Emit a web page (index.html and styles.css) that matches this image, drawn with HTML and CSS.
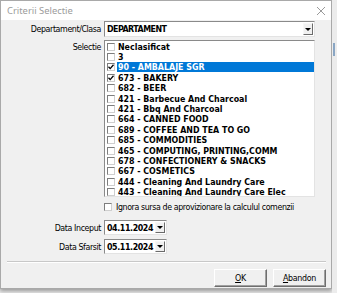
FILE: index.html
```html
<!DOCTYPE html>
<html>
<head>
<meta charset="utf-8">
<link rel="stylesheet" href="styles.css">
</head>
<body>
<div class="screen">
  <div class="dialog">
    <div class="titlebar">
      <span class="title">Criterii Selectie</span>
      <svg class="close" width="10" height="10" viewBox="0 0 10 10"><path d="M1 1L9 9M9 1L1 9" stroke="#9a9a9a" stroke-width="1" fill="none"/></svg>
    </div>
    <div class="body">
      <div class="row row-combo">
        <span class="lbl">Departament/Clasa</span>
        <div class="combo">
          <span class="combo-text">DEPARTAMENT</span>
          <span class="dd"><span class="tri"></span></span>
        </div>
      </div>
      <div class="row row-list">
        <span class="lbl lbl-top">Selectie</span>
        <div class="listbox">
          <div class="item"><span class="cb"></span><span class="txt">Neclasificat</span></div>
          <div class="item"><span class="cb"></span><span class="txt">3</span></div>
          <div class="item"><span class="cb"><svg class="tick" width="6" height="6" viewBox="0 0 6 6"><path d="M0.5 2.8L2.2 4.6L5.5 0.8" stroke="#000" stroke-width="1.3" fill="none"/></svg></span><span class="txt sel">90 - AMBALAJE SGR</span></div>
          <div class="item"><span class="cb"><svg class="tick" width="6" height="6" viewBox="0 0 6 6"><path d="M0.5 2.8L2.2 4.6L5.5 0.8" stroke="#000" stroke-width="1.3" fill="none"/></svg></span><span class="txt">673 - BAKERY</span></div>
          <div class="item"><span class="cb"></span><span class="txt">682 - BEER</span></div>
          <div class="item"><span class="cb"></span><span class="txt">421 - Barbecue And Charcoal</span></div>
          <div class="item"><span class="cb"></span><span class="txt">421 - Bbq And Charcoal</span></div>
          <div class="item"><span class="cb"></span><span class="txt">664 - CANNED FOOD</span></div>
          <div class="item"><span class="cb"></span><span class="txt">689 - COFFEE AND TEA TO GO</span></div>
          <div class="item"><span class="cb"></span><span class="txt">685 - COMMODITIES</span></div>
          <div class="item"><span class="cb"></span><span class="txt">465 - COMPUTING, PRINTING,COMM</span></div>
          <div class="item"><span class="cb"></span><span class="txt">678 - CONFECTIONERY &amp; SNACKS</span></div>
          <div class="item"><span class="cb"></span><span class="txt">667 - COSMETICS</span></div>
          <div class="item"><span class="cb"></span><span class="txt">444 - Cleaning And Laundry Care</span></div>
          <div class="item"><span class="cb"></span><span class="txt">443 - Cleaning And Laundry Care Elec</span></div>
        </div>
      </div>
      <div class="row row-check">
        <span class="lbl"></span>
        <div class="check-wrap"><span class="cb"></span><span class="check-text">Ignora sursa de aprovizionare la calculul comenzii</span></div>
      </div>
      <div class="row row-date">
        <span class="lbl">Data Inceput</span>
        <div class="datebox"><span class="date-text">04.11.2024</span><span class="dd"><span class="tri"></span></span></div>
      </div>
      <div class="row row-date">
        <span class="lbl">Data Sfarsit</span>
        <div class="datebox"><span class="date-text">05.11.2024</span><span class="dd"><span class="tri"></span></span></div>
      </div>
      <div class="sep"></div>
      <div class="buttons">
        <button class="btn"><u>O</u>K</button>
        <button class="btn"><u>A</u>bandon</button>
      </div>
    </div>
  </div>
  <div class="side"><div class="side-bar"></div></div>
</div>
</body>
</html>
```
FILE: styles.css
```css
* { box-sizing: border-box; }
html, body { margin: 0; padding: 0; }
body {
  width: 337px;
  height: 293px;
  overflow: hidden;
  background: #e6e6e6;
  font-family: "DejaVu Sans Condensed", "DejaVu Sans", sans-serif;
  font-stretch: condensed;
  font-size: 8.8px;
  color: #000;
}
.screen {
  display: flex;
  width: 337px;
  height: 293px;
  background: #e9e9e9;
}
.dialog {
  width: 332px;
  height: 289px;
  border: 1px solid #a9a9a9;
  background: #f0f0f0;
  display: flex;
  flex-direction: column;
  box-shadow: 0 2px 4px rgba(0,0,0,0.35);
  flex: none;
}
.side {
  flex: 1;
  background: #ececec;
  padding-top: 43px;
  padding-left: 1px;
}
.side-bar {
  width: 2px;
  height: 13px;
  background: #8aa6c4;
}
.titlebar {
  height: 19px;
  background: #fff;
  display: flex;
  align-items: center;
  justify-content: space-between;
  padding: 0 5px 0 6px;
  flex: none;
}
.title {
  font-family: "Noto Sans", "Open Sans", sans-serif;
  font-stretch: normal;
  font-size: 9.4px;
  color: #9b9b9b;
}
.close { display: block; }
.body {
  flex: 1;
  display: flex;
  flex-direction: column;
  padding-top: 1px;
}
.row {
  display: flex;
  align-items: center;
  column-gap: 3px;
}
.lbl {
  width: 100px;
  flex: none;
  text-align: right;
  white-space: nowrap;
  letter-spacing: -0.4px;
}
.combo, .datebox {
  display: flex;
  align-items: center;
  justify-content: space-between;
  background: #fff;
  border: 1px solid;
  border-color: #8a8a8a #e3e3e3 #e3e3e3 #8a8a8a;
  padding: 1px;
  font-weight: bold;
}
.combo { width: 211px; height: 16px; }
.combo-text { padding-left: 1px; letter-spacing: -0.5px; }
.date-text { padding-left: 1px; letter-spacing: -0.4px; }
.dd {
  width: 10px;
  height: 12px;
  background: #f0f0f0;
  border: 1px solid;
  border-color: #f7f7f7 #6b6b6b #6b6b6b #f7f7f7;
  display: flex;
  align-items: center;
  justify-content: center;
  flex: none;
}
.tri {
  width: 0;
  height: 0;
  border-left: 3px solid transparent;
  border-right: 3px solid transparent;
  border-top: 3px solid #000;
}
.row-list { align-items: flex-start; margin-top: 3px; }
.lbl-top { padding-top: 2px; }
.listbox {
  width: 211px;
  height: 157px;
  background: #fff;
  border: 1px solid;
  border-color: #8a8a8a #e3e3e3 #e3e3e3 #8a8a8a;
  padding: 0.5px 0 0 1px;
  overflow: hidden;
  font-weight: bold;
}
.item {
  display: flex;
  align-items: center;
  height: 10.4px;
}
.cb {
  width: 8px;
  height: 8px;
  flex: none;
  background: #fff;
  border: 1px solid;
  border-color: #7d7d7d #cfcfcf #cfcfcf #7d7d7d;
  margin-left: 1px;
  display: flex;
  align-items: center;
  justify-content: center;
}
.tick { display: block; }
.txt {
  flex: 1;
  margin-left: 2px;
  padding-left: 1px;
  line-height: 10px;
  height: 10px;
  white-space: nowrap;
}
.txt.sel { background: #0078d7; color: #fff; }
.row-check { margin-top: 5px; height: 10px; }
.check-wrap { display: flex; align-items: center; }
.check-wrap .cb { margin-left: 0; }
.check-text { margin-left: 4px; white-space: nowrap; letter-spacing: -0.4px; }
.row-date { margin-top: 4px; }
.row-check + .row-date { margin-top: 8px; }
.datebox { width: 63px; height: 15px; }
.datebox .dd { height: 11px; }
.sep {
  margin: 7px 5px 0 6px;
  height: 2px;
  border-top: 1px solid #c8c8c8;
  border-bottom: 1px solid #fff;
}
.buttons {
  display: flex;
  justify-content: flex-end;
  column-gap: 6px;
  padding-right: 5px;
  margin-top: 6px;
}
.btn {
  font: inherit;
  letter-spacing: -0.3px;
  width: 53px;
  height: 18px;
  padding: 0;
  background: #f0f0f0;
  border: 1px solid;
  border-color: #ffffff #6e6e6e #6e6e6e #ffffff;
  box-shadow: inset -1px -1px 0 #a0a0a0;
  color: #000;
}
```
